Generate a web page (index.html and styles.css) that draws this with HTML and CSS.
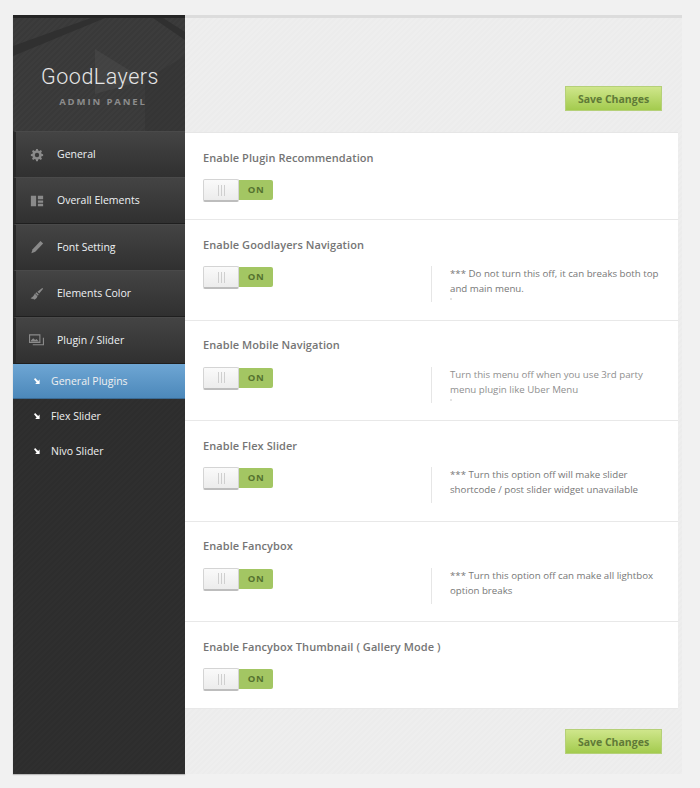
FILE: index.html
```html
<!DOCTYPE html>
<html lang="en">
<head>
  <meta charset="UTF-8">
  <title>GoodLayers Admin Panel</title>
  <link rel="stylesheet" href="styles.css">
</head>
<body>
  <div class="panel">
    <!-- Sidebar -->
    <div class="sidebar">
      <div class="logo">
        <svg class="logo-art" viewBox="0 0 172 116" preserveAspectRatio="none" aria-hidden="true">
          <polygon points="0,28 78,0 92,0 0,38" fill="#303030"></polygon>
          <polygon points="150,0 172,14 172,22 140,0" fill="#303030"></polygon>
          <polygon points="82,31 132,62 82,76" fill="#4a4a4a" opacity="0.55"></polygon>
          <polygon points="132,62 172,38 172,116 132,116" fill="#333" opacity="0.6"></polygon>
        </svg>
        <div class="logo-name">GoodLayers</div>
        <div class="logo-sub">ADMIN PANEL</div>
      </div>
      <ul class="menu">
        <li class="menu-item">
          <svg class="menu-icon" viewBox="0 0 16 16"><path fill="#8a8a8a" fill-rule="evenodd" d="M7 1h2l.4 1.8 1.3.5L12.3 2.300l1.400 1.400-1 1.600.5 1.300L15 7v2l-1.800.4-.5 1.300 1 1.600-1.400 1.400-1.600-1-1.300.5L9 15H7l-.4-1.800-1.300-.5-1.600 1-1.400-1.400 1-1.600-.5-1.300L1 9V7l1.800-.4.500-1.300-1-1.600 1.400-1.400 1.600 1 1.300-.5zM8 5.500a2.500 2.500 0 1 0 0 5 2.500 2.500 0 0 0 0-5z"></path></svg>
          <span>General</span>
        </li>
        <li class="menu-item">
          <svg class="menu-icon" viewBox="0 0 16 16"><path fill="#8a8a8a" d="M1 2h6v12H1zM9 2h6v4H9zM9 7.500h6v2.500H9zM9 11h6v3H9z"></path></svg>
          <span>Overall Elements</span>
        </li>
        <li class="menu-item">
          <svg class="menu-icon" viewBox="0 0 16 16"><path fill="#8a8a8a" d="M12 1l3 3-9 9.500-4.500 1.500L3 10.500z"></path></svg>
          <span>Font Setting</span>
        </li>
        <li class="menu-item">
          <svg class="menu-icon" viewBox="0 0 16 16"><path fill="#8a8a8a" d="M14 1l1 1-4.500 5.500-2-2zM7.500 6l2.500 2.500-1 1.500L6 7zM5.500 7.500l3 3c-.5 2-2 3.500-4 4l-.5-1-1 .5-.5-1-1.500.5L1 12.500c2-.5 3.500-2.500 4.500-5z"></path></svg>
          <span>Elements Color</span>
        </li>
        <li class="menu-item">
          <svg class="menu-icon menu-icon-wide" viewBox="0 0 16 16"><path fill="none" stroke="#8a8a8a" stroke-width="1.200" d="M.6 2h11v8H.6zM4 12.500h11.400V5"></path><path fill="#8a8a8a" d="M2 8l2.500-2.500L6.500 7.500 8 6.500 10.500 9H2z"></path></svg>
          <span>Plugin / Slider</span>
        </li>
      </ul>
      <ul class="submenu">
        <li class="sub-item sub-active">
          <svg class="sub-arrow" viewBox="0 0 8 8"><path fill="#fff" d="M0 1.500L1.500 0l4 4L7.500 2v6H1.500l2-2z"></path></svg>
          <span>General Plugins</span>
        </li>
        <li class="sub-item">
          <svg class="sub-arrow" viewBox="0 0 8 8"><path fill="#fff" d="M0 1.500L1.500 0l4 4L7.500 2v6H1.500l2-2z"></path></svg>
          <span>Flex Slider</span>
        </li>
        <li class="sub-item">
          <svg class="sub-arrow" viewBox="0 0 8 8"><path fill="#fff" d="M0 1.500L1.500 0l4 4L7.500 2v6H1.500l2-2z"></path></svg>
          <span>Nivo Slider</span>
        </li>
      </ul>
    </div>

    <!-- Content -->
    <div class="main">
      <div class="bar bar-top">
        <button class="save">Save Changes</button>
      </div>
      <div class="rows">
        <div class="row row-a">
          <h3>Enable Plugin Recommendation</h3>
          <div class="row-body">
            <div class="toggle"><div class="knob"><i></i><i></i><i></i></div><div class="on">ON</div></div>
          </div>
        </div>
        <div class="row row-b">
          <h3>Enable Goodlayers Navigation</h3>
          <div class="row-body">
            <div class="toggle"><div class="knob"><i></i><i></i><i></i></div><div class="on">ON</div></div>
            <p class="note note-dot">*** Do not turn this off, it can breaks both top and main menu.</p>
          </div>
        </div>
        <div class="row row-b">
          <h3>Enable Mobile Navigation</h3>
          <div class="row-body">
            <div class="toggle"><div class="knob"><i></i><i></i><i></i></div><div class="on">ON</div></div>
            <p class="note note-light note-dot">Turn this menu off when you use 3rd party menu plugin like Uber Menu</p>
          </div>
        </div>
        <div class="row row-b">
          <h3>Enable Flex Slider</h3>
          <div class="row-body">
            <div class="toggle"><div class="knob"><i></i><i></i><i></i></div><div class="on">ON</div></div>
            <p class="note">*** Turn this option off will make slider shortcode / post slider widget unavailable</p>
          </div>
        </div>
        <div class="row row-b">
          <h3>Enable Fancybox</h3>
          <div class="row-body">
            <div class="toggle"><div class="knob"><i></i><i></i><i></i></div><div class="on">ON</div></div>
            <p class="note">*** Turn this option off can make all lightbox option breaks</p>
          </div>
        </div>
        <div class="row row-a row-last">
          <h3>Enable Fancybox Thumbnail ( Gallery Mode )</h3>
          <div class="row-body">
            <div class="toggle"><div class="knob"><i></i><i></i><i></i></div><div class="on">ON</div></div>
          </div>
        </div>
      </div>
      <div class="bar bar-bottom">
        <button class="save">Save Changes</button>
      </div>
    </div>
  </div>
</body>
</html>
```

FILE: styles.css
```css
body {
  margin: 0;
  background: #f1f1f1;
  font-family: 'Open Sans', 'Liberation Sans', sans-serif;
}
ul {
  list-style: none;
  margin: 0;
  padding: 0;
}
.panel {
  display: flex;
  width: 669px;
  height: 759px;
  margin: 15px 0 14px 13px;
}

/* Sidebar */
.sidebar {
  width: 172px;
  flex-shrink: 0;
  background: repeating-linear-gradient(135deg, #2f2f2f 0, #2f2f2f 2px, #2d2d2d 2px, #2d2d2d 4px);
  box-shadow: 0 1px 1px #bbb;
}
.logo {
  position: relative;
  height: 116px;
  box-sizing: border-box;
  padding-top: 49px;
  overflow: hidden;
  text-align: center;
  border-top: 3px solid #252525;
  background: repeating-linear-gradient(135deg, #3c3c3c 0, #3c3c3c 2px, #393939 2px, #393939 4px);
}
.logo-art {
  position: absolute;
  top: 0;
  left: 0;
  width: 172px;
  height: 116px;
}
.logo-name {
  position: relative;
  margin-top: -3px;
  padding-left: 2px;
  font-family: 'Roboto', sans-serif;
  font-weight: 300;
  font-size: 21.500px;
  line-height: 26px;
  letter-spacing: 0.5px;
  color: #e6e6e6;
}
.logo-sub {
  position: relative;
  margin-top: 6px;
  padding-left: 8px;
  font-size: 9.500px;
  line-height: 12px;
  font-weight: 700;
  letter-spacing: 1.900px;
  color: #8c8c8c;
}
.menu-item {
  display: flex;
  align-items: center;
  height: 45px;
  padding-left: 14px;
  box-sizing: content-box;
  border-top: 1px solid #4a4a4a;
  border-bottom: 1px solid #1f1f1f;
  border-left: 3px solid #282828;
  margin-bottom: -0.6px;
  background: linear-gradient(#444444, #303030);
  font-size: 10.500px;
  line-height: 13px;
  color: #eef1f4;
}
.menu-icon {
  width: 14px;
  height: 14px;
  margin-right: 13px;
  flex-shrink: 0;
}
.menu-icon-wide {
  width: 15px;
  height: 15px;
  margin-left: -1px;
}
.sub-item {
  display: flex;
  align-items: center;
  height: 35px;
  padding-left: 21px;
  font-size: 10.500px;
  color: #f0f0f0;
}
.sub-active {
  background: linear-gradient(#6ea6d4, #4c88ba);
  border-bottom: 1px solid #3a6a94;
  box-sizing: border-box;
  margin-top: 0.500px;
}
.sub-arrow {
  width: 6px;
  height: 6px;
  margin-right: 11px;
}

/* Content */
.main {
  flex: 1;
  display: flex;
  flex-direction: column;
  background: repeating-linear-gradient(135deg, #eeeeee 0, #eeeeee 2px, #ececec 2px, #ececec 4px);
  border-top: 3px solid #dcdcdc;
  box-sizing: border-box;
}
.bar {
  display: flex;
  justify-content: flex-end;
  padding-right: 20px;
  box-sizing: border-box;
}
.bar-top {
  height: 114px;
  padding-top: 68px;
}
.bar-bottom {
  padding-top: 20px;
}
.save {
  width: 97px;
  height: 25px;
  padding: 0;
  border: 1px solid #b5d078;
  background: linear-gradient(#cfe68b, #a3cb4e);
  font-family: inherit;
  font-size: 10.500px;
  font-weight: 700;
  color: #5f7a37;
}
.rows {
  margin-right: 4px;
  background: #fff;
  border-top: 1px solid #e6e6e6;
}
.row {
  padding-left: 18px;
  box-sizing: border-box;
  border-bottom: 1px solid #e8e8e8;
}
.row-a {
  height: 87px;
}
.row-b {
  height: 100.500px;
}
.row h3 {
  margin: 0;
  padding-top: 16.500px;
  font-size: 11px;
  line-height: 15px;
  font-weight: 600;
  letter-spacing: 0.07px;
  color: #757575;
}
.row-body {
  display: flex;
  align-items: flex-start;
  margin-top: 15.500px;
}
.toggle {
  display: flex;
  width: 70px;
  height: 23px;
  margin-top: -1px;
}
.knob {
  display: flex;
  justify-content: center;
  align-items: center;
  gap: 2px;
  width: 36px;
  height: 23px;
  box-sizing: border-box;
  border: 1px solid #d4d4d4;
  border-bottom: 2px solid #bdbdbd;
  border-radius: 2px;
  background: linear-gradient(#fafafa, #ececec);
}
.knob i {
  width: 1px;
  height: 11px;
  background: #cfcfcf;
}
.on {
  flex: 1;
  height: 20px;
  margin-top: 1px;
  background: #a3c663;
  border-radius: 0 2px 2px 0;
  font-size: 9.500px;
  line-height: 20px;
  font-weight: 700;
  letter-spacing: 0.5px;
  text-align: center;
  color: #55722f;
}
.note {
  width: 213px;
  height: 36px;
  margin: -1px 0 0 158px;
  padding-left: 18px;
  border-left: 1px solid #e6e6e6;
  font-size: 9.700px;
  line-height: 15px;
  color: #777;
}
.note-light {
  color: #8f8f8f;
}
.note-dot::after {
  content: '';
  display: block;
  width: 2px;
  height: 2px;
  margin-top: 2px;
  background: #e4e4e4;
}
```
